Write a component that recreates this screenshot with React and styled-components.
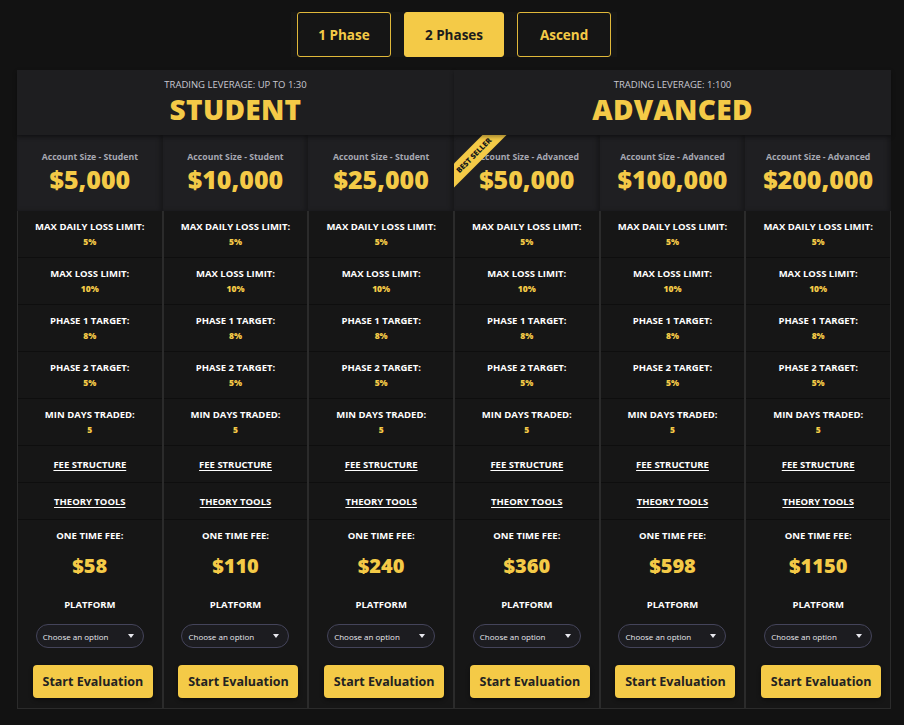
import React, { useState } from "react";
import styled, { createGlobalStyle } from "styled-components";

const GlobalStyle = createGlobalStyle`
  * { box-sizing: border-box; }
  body {
    margin: 0;
    background: #121212;
    font-family: "Open Sans", "Liberation Sans", sans-serif;
    color: #fff;
  }
`;

const groups = [
  {
    name: "STUDENT",
    leverage: "TRADING LEVERAGE: UP TO 1:30",
    label: "Student",
    plans: [
      { size: "$5,000", fee: "$58" },
      { size: "$10,000", fee: "$110" },
      { size: "$25,000", fee: "$240" },
    ],
  },
  {
    name: "ADVANCED",
    leverage: "TRADING LEVERAGE: 1:100",
    label: "Advanced",
    plans: [
      { size: "$50,000", fee: "$360", best: true },
      { size: "$100,000", fee: "$598" },
      { size: "$200,000", fee: "$1150" },
    ],
  },
];

const rules = [
  ["MAX DAILY LOSS LIMIT:", "5%"],
  ["MAX LOSS LIMIT:", "10%"],
  ["PHASE 1 TARGET:", "8%"],
  ["PHASE 2 TARGET:", "5%"],
  ["MIN DAYS TRADED:", "5"],
];

const App = () => {
  const [tab, setTab] = useState("2 Phases");

  return (
    <>
      <GlobalStyle />
      <Page>
        <Tabs>
          {["1 Phase", "2 Phases", "Ascend"].map((t) => (
            <TabButton key={t} $active={tab === t} onClick={() => setTab(t)}>
              {t}
            </TabButton>
          ))}
        </Tabs>
        <Table>
          {groups.map((g) => (
            <GroupHeader key={g.name}>
              <Leverage>{g.leverage}</Leverage>
              <GroupTitle>{g.name}</GroupTitle>
            </GroupHeader>
          ))}
          {groups.map((g) =>
            g.plans.map((p, i) => (
              <Column key={p.size}>
                <SizeCell>
                  {p.best && <Ribbon>BEST SELLER</Ribbon>}
                  <SizeLabel>Account Size - {g.label}</SizeLabel>
                  <SizePrice>{p.size}</SizePrice>
                </SizeCell>
                <Body $first={g.name === "STUDENT" && i === 0}>
                  {rules.map(([label, value]) => (
                    <RuleRow key={label}>
                      <RuleLabel>{label}</RuleLabel>
                      <RuleValue>{value}</RuleValue>
                    </RuleRow>
                  ))}
                  <LinkRow>
                    <RuleLink href="#">FEE STRUCTURE</RuleLink>
                  </LinkRow>
                  <LinkRow>
                    <RuleLink href="#">THEORY TOOLS</RuleLink>
                  </LinkRow>
                  <Checkout>
                    <RuleLabel>ONE TIME FEE:</RuleLabel>
                    <Fee>{p.fee}</Fee>
                    <RuleLabel>PLATFORM</RuleLabel>
                    <Select>
                      <span>Choose an option</span>
                      <Caret />
                    </Select>
                    <StartButton>Start Evaluation</StartButton>
                  </Checkout>
                </Body>
              </Column>
            ))
          )}
        </Table>
      </Page>
    </>
  );
};

const Page = styled.div`
  padding: 12px 13px 0 17px;
  display: flex;
  flex-direction: column;
  align-items: center;
  gap: 13px;
`;

const Tabs = styled.div`
  display: flex;
  gap: 13px;
  padding: 0 6px;
  background: #161616;
`;

const TabButton = styled.button`
  height: 45px;
  min-width: 94px;
  padding: 0 20px;
  border-radius: 3px;
  border: 1px solid ${(p) => (p.$active ? "#f4ca47" : "#e0b83a")};
  background: ${(p) => (p.$active ? "#f4ca47" : "#151515")};
  color: ${(p) => (p.$active ? "#1c1c1c" : "#f4ca47")};
  font-family: inherit;
  font-weight: 700;
  font-size: 13.5px;
  cursor: pointer;
`;

const Table = styled.div`
  width: 100%;
  display: grid;
  grid-template-columns: repeat(6, 1fr);
`;

const GroupHeader = styled.div`
  grid-column: span 3;
  height: 65px;
  background: #1e1e20;
  display: flex;
  flex-direction: column;
  align-items: center;
  padding-top: 8px;
  box-shadow: 0 2px 4px rgba(0, 0, 0, 0.35);
  position: relative;
  z-index: 1;
`;

const Leverage = styled.div`
  font-size: 9.5px;
  color: #c9c9d2;
  line-height: 14px;
`;

const GroupTitle = styled.div`
  font-size: 28px;
  font-weight: 800;
  color: #f4ca47;
  line-height: 34px;
  letter-spacing: 0.3px;
`;

const Column = styled.div`
  display: flex;
  flex-direction: column;
  min-width: 0;
`;

const SizeCell = styled.div`
  position: relative;
  overflow: hidden;
  height: 76px;
  background: #1f1f22;
  display: flex;
  flex-direction: column;
  align-items: center;
  padding-top: 15px;
  box-shadow: inset -3px 0 4px rgba(0, 0, 0, 0.25);
`;

const Ribbon = styled.div`
  position: absolute;
  top: 12px;
  left: -30px;
  width: 100px;
  height: 17px;
  background: #f4ca47;
  color: #1a1a1a;
  font-size: 7.5px;
  font-weight: 800;
  line-height: 17px;
  text-align: center;
  transform: rotate(-45deg);
`;

const SizeLabel = styled.div`
  font-size: 8.7px;
  font-weight: 700;
  color: #a7a8b2;
  line-height: 14px;
`;

const SizePrice = styled.div`
  font-size: 25px;
  font-weight: 800;
  color: #f4ca47;
  line-height: 30px;
`;

const Body = styled.div`
  flex: 1;
  background: #161616;
  border: 1px solid #2b2b2b;
  border-top: none;
  display: flex;
  flex-direction: column;
  padding-bottom: ${(p) => (p.$first ? "10px" : "7px")};
`;

const RuleRow = styled.div`
  height: 47px;
  border-bottom: 1px solid #0e0e0e;
  display: flex;
  flex-direction: column;
  align-items: center;
  justify-content: center;
  gap: 3px;
`;

const RuleLabel = styled.div`
  font-size: 9.5px;
  font-weight: 700;
  color: #fff;
  line-height: 12px;
  white-space: nowrap;
`;

const RuleValue = styled.div`
  font-size: 8.5px;
  font-weight: 800;
  color: #f4ca47;
  line-height: 11px;
`;

const LinkRow = styled.div`
  height: 37px;
  border-bottom: 1px solid #0e0e0e;
  display: flex;
  align-items: center;
  justify-content: center;
`;

const RuleLink = styled.a`
  font-size: 9.5px;
  font-weight: 700;
  color: #fff;
  text-decoration: underline;
  text-underline-offset: 2px;
`;

const Checkout = styled.div`
  display: flex;
  flex-direction: column;
  align-items: center;
  padding-top: 10px;
`;

const Fee = styled.div`
  font-size: 20px;
  font-weight: 800;
  color: #f4ca47;
  line-height: 24px;
  margin: 12px 0 21px;
`;

const Select = styled.div`
  margin-top: 13px;
  width: 108px;
  height: 24px;
  border-radius: 12px;
  border: 1px solid #44445a;
  background: #1c1c20;
  display: flex;
  align-items: center;
  justify-content: space-between;
  padding: 0 9px 0 6px;
  font-size: 8px;
  color: #e8e8ee;
`;

const Caret = styled.span`
  width: 0;
  height: 0;
  border-left: 3.5px solid transparent;
  border-right: 3.5px solid transparent;
  border-top: 4px solid #e8e8ee;
`;

const StartButton = styled.button`
  margin: 17px 0 0 6px;
  width: 120px;
  height: 33px;
  border: none;
  border-radius: 4px;
  background: #f4ca47;
  color: #222;
  font-family: inherit;
  font-size: 12.5px;
  font-weight: 700;
  box-shadow: 0 2px 4px rgba(0, 0, 0, 0.4);
  cursor: pointer;
`;

export default App;
